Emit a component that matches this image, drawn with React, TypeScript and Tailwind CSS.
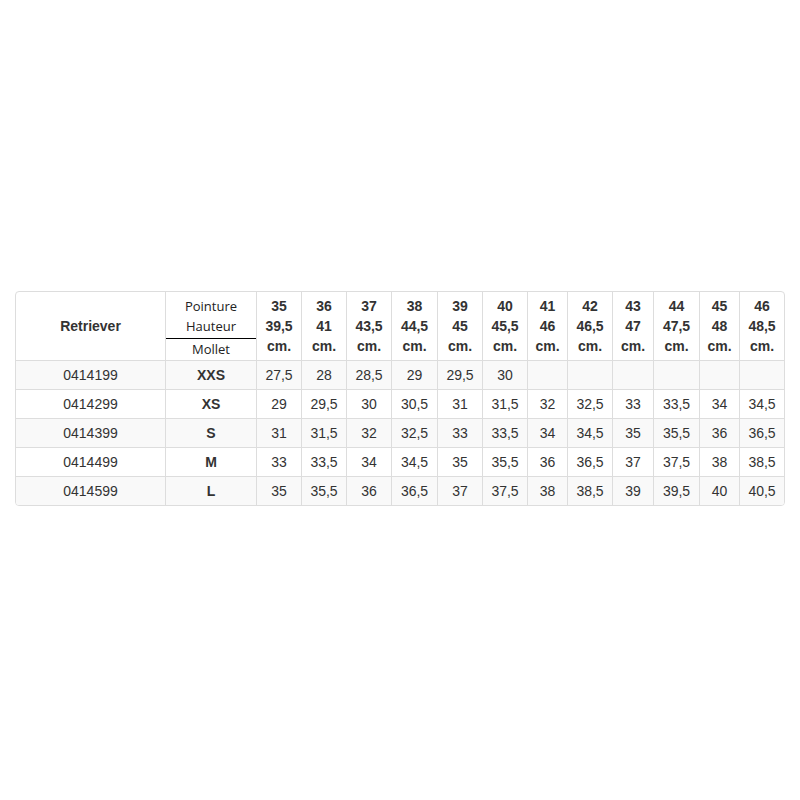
import React from "react";

const heads: [string, string][] = [
  ["35", "39,5"],
  ["36", "41"],
  ["37", "43,5"],
  ["38", "44,5"],
  ["39", "45"],
  ["40", "45,5"],
  ["41", "46"],
  ["42", "46,5"],
  ["43", "47"],
  ["44", "47,5"],
  ["45", "48"],
  ["46", "48,5"],
];

const rows: { ref: string; size: string; vals: string[] }[] = [
  { ref: "0414199", size: "XXS", vals: ["27,5", "28", "28,5", "29", "29,5", "30", "", "", "", "", "", ""] },
  { ref: "0414299", size: "XS", vals: ["29", "29,5", "30", "30,5", "31", "31,5", "32", "32,5", "33", "33,5", "34", "34,5"] },
  { ref: "0414399", size: "S", vals: ["31", "31,5", "32", "32,5", "33", "33,5", "34", "34,5", "35", "35,5", "36", "36,5"] },
  { ref: "0414499", size: "M", vals: ["33", "33,5", "34", "34,5", "35", "35,5", "36", "36,5", "37", "37,5", "38", "38,5"] },
  { ref: "0414599", size: "L", vals: ["35", "35,5", "36", "36,5", "37", "37,5", "38", "38,5", "39", "39,5", "40", "40,5"] },
];

export default function App() {
  return (
    <div
      className="w-[800px] h-[800px] bg-white pt-[291px] pl-[15px] text-[14px] leading-[20px] text-[#333]"
      style={{ fontFamily: '"Liberation Sans", Arial, sans-serif' }}
    >
      <div className="w-[770px] border border-[#ddd] rounded-[4px] overflow-hidden">
        <div className="grid grid-cols-[149px_91px_45px_45px_45px_46px_45px_45px_40px_45px_41px_46px_40px_45px]">
          {/* header */}
          <div className="h-[68px] flex items-center justify-center font-bold">Retriever</div>
          <div
            className="h-[68px] border-l border-[#ddd] pt-[4px] flex flex-col text-center text-[13px] text-[#222]"
            style={{ fontFamily: '"Open Sans", "Liberation Sans", sans-serif' }}
          >
            <div className="pb-[2px] border-b border-black">
              <div className="leading-[20px]">Pointure</div>
              <div className="leading-[20px]">Hauteur</div>
            </div>
            <div className="leading-[20px]">Mollet</div>
          </div>
          {heads.map(([a, b]) => (
            <div
              key={a}
              className="h-[68px] border-l border-[#ddd] py-[4px] flex flex-col items-center font-bold"
            >
              <div>{a}</div>
              <div>{b}</div>
              <div>cm.</div>
            </div>
          ))}
          {/* body */}
          {rows.map((r, i) => {
            const bg = i % 2 === 0 ? "bg-[#f9f9f9]" : "bg-white";
            return (
              <React.Fragment key={r.ref}>
                <div className={`h-[29px] border-t border-[#ddd] py-[4px] text-center ${bg}`}>{r.ref}</div>
                <div className={`h-[29px] border-t border-l border-[#ddd] py-[4px] text-center font-bold ${bg}`}>
                  {r.size}
                </div>
                {r.vals.map((v, j) => (
                  <div
                    key={j}
                    className={`h-[29px] border-t border-l border-[#ddd] py-[4px] text-center ${bg}`}
                  >
                    {v}
                  </div>
                ))}
              </React.Fragment>
            );
          })}
        </div>
      </div>
    </div>
  );
}
